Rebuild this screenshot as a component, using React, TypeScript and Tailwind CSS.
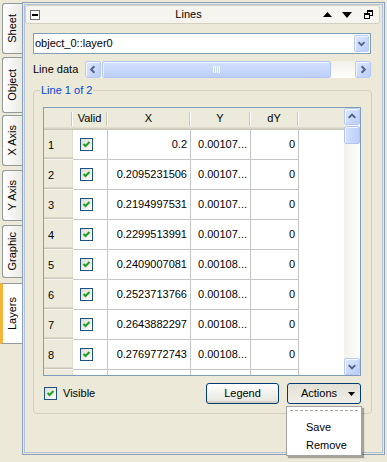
import React from "react"

type Dir = "up" | "down" | "left" | "right"

const ScrollBtn = ({ dir, className = "" }: { dir: Dir; className?: string }) => {
  const pts = {
    up: "4,9 7.5,5.5 11,9",
    down: "4,6 7.5,9.5 11,6",
    left: "9,4 5.5,7.5 9,11",
    right: "6,4 9.5,7.5 6,11",
  }[dir]
  return (
    <div
      className={`shrink-0 flex items-center justify-center rounded-[2px] border border-[#b7cbf5] bg-linear-to-br from-[#e0e8fd] to-[#b9cdf9] shadow-[inset_1px_1px_0_#f2f6ff] ${className}`}
    >
      <svg width="15" height="15" viewBox="0 0 15 15">
        <polyline points={pts} stroke="#4d6185" strokeWidth="2" fill="none" />
      </svg>
    </div>
  )
}

const Check = () => (
  <div className="w-[13px] h-[13px] shrink-0 border border-[#1c5180] bg-linear-to-br from-[#dedcd4] to-white flex items-center justify-center">
    <svg width="11" height="11" viewBox="0 0 11 11">
      <path d="M2.5 5 L4.5 7 L8.5 3" stroke="#21a121" strokeWidth="2" fill="none" />
    </svg>
  </div>
)

const Tab = ({ label, className }: { label: string; className: string }) => (
  <div
    className={`ml-[2px] w-[20px] flex items-center justify-center rounded-l-[3px] border border-r-0 border-[#919b9c] bg-linear-to-r from-white to-[#ebeae3] ${className}`}
  >
    <span className="[writing-mode:vertical-rl] rotate-180 whitespace-nowrap">{label}</span>
  </div>
)

const HeadSep = () => (
  <div className="flex shrink-0 h-[14px]">
    <div className="w-[1px] bg-[#cdc9b8]" />
    <div className="w-[1px] bg-white" />
  </div>
)

const rows = [
  { n: 1, x: "0.2", y: "0.00107..." },
  { n: 2, x: "0.2095231506", y: "0.00107..." },
  { n: 3, x: "0.2194997531", y: "0.00107..." },
  { n: 4, x: "0.2299513991", y: "0.00107..." },
  { n: 5, x: "0.2409007081", y: "0.00108..." },
  { n: 6, x: "0.2523713766", y: "0.00108..." },
  { n: 7, x: "0.2643882297", y: "0.00108..." },
  { n: 8, x: "0.2769772743", y: "0.00108..." },
]

const rowHead =
  "w-[29px] h-full flex items-center pl-[4px] bg-[#ebeadb] shadow-[inset_0_-1px_#f7f6f0,inset_0_-2px_#cbc7b8,inset_0_-3px_#dcd8c8,inset_-1px_0_#e2decd]"
const cell = "h-full flex items-center border-r border-b border-[#c6c6c6]"

export default function App() {
  return (
    <div className="relative w-[387px] h-[462px] bg-[#ece9d8] overflow-hidden flex text-[11px] leading-[13px] text-black font-['Liberation_Sans',Arial,sans-serif]">
      {/* Side tabs */}
      <div className="w-[22px] shrink-0 flex flex-col">
        <Tab label="Sheet" className="mt-[3px] h-[51px]" />
        <Tab label="Object" className="mt-[3px] h-[56px]" />
        <Tab label="X Axis" className="mt-[2px] h-[51px]" />
        <Tab label="Y Axis" className="mt-[4px] h-[51px]" />
        <Tab label="Graphic" className="mt-[4px] h-[53px]" />
        <div className="mt-[5px] w-[22px] h-[61px] flex items-center justify-center border-y border-[#919b9c] border-l-[3px] border-l-[#f5b53a] bg-white">
          <span className="[writing-mode:vertical-rl] rotate-180 whitespace-nowrap">Layers</span>
        </div>
      </div>

      {/* Dock frame */}
      <div className="mt-[2px] h-[453px] w-[363px] border border-[#8aa0bb] p-[1px]">
        <div className="h-full border border-[#b3c2d6] flex flex-col">
          {/* Title bar */}
          <div className="h-[19px] mr-[2px] flex items-center rounded-[3px] border border-[#d3d0c2] bg-[#f5f4ef]">
            <div className="ml-[4px] w-[10px] h-[10px] border border-[#707070] bg-[#fbfbf8] flex items-center justify-center">
              <div className="w-[6px] h-[2px] bg-black" />
            </div>
            <div className="flex-1 pl-[14px] text-center">Lines</div>
            <div className="flex items-center mr-[6px]">
              <svg width="9" height="5" viewBox="0 0 9 5">
                <polygon points="0,5 4.5,0 9,5" fill="black" />
              </svg>
              <svg width="10" height="6" viewBox="0 0 10 6" className="ml-[10px]">
                <polygon points="0,0 10,0 5,6" fill="black" />
              </svg>
              <svg width="9" height="9" viewBox="0 0 9 9" className="ml-[12px]">
                <rect x="3.5" y="0.5" width="5" height="5" fill="none" stroke="black" />
                <rect x="3" y="0" width="6" height="2" fill="black" />
                <rect x="0.5" y="3.5" width="5" height="5" fill="white" stroke="black" />
                <rect x="0" y="3" width="6" height="2" fill="black" />
              </svg>
            </div>
          </div>

          {/* Combo */}
          <div className="mt-[9px] ml-[8px] w-[338px] h-[21px] border border-[#7f9db9] bg-white flex items-center">
            <span className="pl-[1px] flex-1">object_0::layer0</span>
            <ScrollBtn dir="down" className="w-[15px] h-[17px] mr-[1px]" />
          </div>

          {/* Line data */}
          <div className="mt-[7px] ml-[8px] flex items-center h-[17px]">
            <span className="w-[52px]">Line data</span>
            <div className="w-[286px] h-[17px] flex bg-linear-to-b from-[#f3f1ec] to-[#fefefb]">
              <ScrollBtn dir="left" className="w-[16px] h-[17px]" />
              <div className="ml-[1px] w-[229px] h-[17px] rounded-[2px] border border-[#b1c5f6] bg-linear-to-b from-[#d4e0fd] to-[#bccff9] shadow-[inset_1px_1px_0_#eef3ff] flex items-center justify-center">
                <div className="flex gap-[1px]">
                  <div className="w-[1px] h-[7px] bg-white" />
                  <div className="w-[1px] h-[7px] bg-white" />
                  <div className="w-[1px] h-[7px] bg-white" />
                  <div className="w-[1px] h-[7px] bg-white" />
                </div>
              </div>
              <div className="flex-1" />
              <ScrollBtn dir="right" className="w-[16px] h-[17px]" />
            </div>
          </div>

          {/* Group box */}
          <div className="relative mt-[12px] ml-[8px] w-[339px] h-[324px] border border-[#d0d0bf] rounded-[4px] pt-[16px] pl-[9px]">
            <span className="absolute left-[6px] top-[-7px] px-[1px] bg-[#ece9d8] text-[#0046d5]">Line 1 of 2</span>

            {/* Table */}
            <div className="w-[318px] h-[269px] border border-[#7f9db9] bg-white flex overflow-hidden">
              <div className="w-[300px] flex flex-col overflow-hidden">
                <div className="h-[22px] shrink-0 flex items-center bg-[#ebeadb] shadow-[inset_0_-1px_#cbc7b8,inset_0_-2px_#d6d2c2,inset_0_-3px_#e2decd]">
                  <div className="w-[29px] h-full flex items-center justify-end pb-[1px]">
                    <HeadSep />
                  </div>
                  <div className="w-[35px] h-full flex items-center pb-[1px]">
                    <span className="flex-1 text-center">Valid</span>
                    <HeadSep />
                  </div>
                  <div className="w-[83px] h-full flex items-center pb-[1px]">
                    <span className="flex-1 text-center">X</span>
                    <HeadSep />
                  </div>
                  <div className="w-[60px] h-full flex items-center pb-[1px]">
                    <span className="flex-1 text-center">Y</span>
                    <HeadSep />
                  </div>
                  <div className="w-[48px] h-full flex items-center pb-[1px]">
                    <span className="flex-1 text-center">dY</span>
                    <HeadSep />
                  </div>
                </div>

                {rows.map((r) => (
                  <div key={r.n} className="h-[30px] shrink-0 flex">
                    <div className={rowHead}>{r.n}</div>
                    <div className={`${cell} w-[35px] pl-[7px]`}>
                      <Check />
                    </div>
                    <div className={`${cell} w-[83px] justify-end pr-[3px]`}>{r.x}</div>
                    <div className={`${cell} w-[60px] justify-end pr-[3px]`}>{r.y}</div>
                    <div className={`${cell} w-[48px] justify-end pr-[3px]`}>0</div>
                  </div>
                ))}
                {/* partially visible next row */}
                <div className="h-[30px] shrink-0 flex">
                  <div className={rowHead} />
                  <div className={`${cell} w-[35px]`} />
                  <div className={`${cell} w-[83px]`} />
                  <div className={`${cell} w-[60px]`} />
                  <div className={`${cell} w-[48px]`} />
                </div>
              </div>

              {/* Vertical scrollbar */}
              <div className="w-[16px] h-full flex flex-col bg-linear-to-r from-[#f3f1ec] to-[#fefefb]">
                <ScrollBtn dir="up" className="w-[16px] h-[17px]" />
                <div className="mt-[1px] h-[18px] rounded-[2px] border border-[#b1c5f6] bg-linear-to-r from-[#d4e0fd] to-[#bccff9] shadow-[inset_1px_1px_0_#eef3ff]" />
                <div className="flex-1" />
                <ScrollBtn dir="down" className="w-[16px] h-[17px]" />
              </div>
            </div>

            {/* Bottom row */}
            <div className="mt-[7px] w-[318px] h-[21px] flex items-center">
              <div className="ml-[1px]">
                <Check />
              </div>
              <span className="ml-[6px]">Visible</span>
              <div className="flex-1" />
              <div className="w-[73px] h-[21px] flex items-center justify-center rounded-[3px] border border-[#003c74] bg-linear-to-b from-white to-[#e6e5dc] shadow-[inset_0_-2px_#d6d0c5]">
                Legend
              </div>
              <div className="ml-[8px] w-[74px] h-[21px] flex items-center rounded-[3px] border border-[#003c74] bg-linear-to-b from-[#e3e1d6] to-[#efeee6]">
                <span className="flex-1 text-center pl-[2px]">Actions</span>
                <svg width="7" height="4" viewBox="0 0 7 4" className="mr-[5px]">
                  <polygon points="0,0 7,0 3.5,4" fill="black" />
                </svg>
              </div>
            </div>
          </div>
        </div>
      </div>

      {/* Popup menu */}
      <div className="absolute left-[286px] top-[406px] w-[76px] h-[50px] border border-[#a5a4a0] bg-white shadow-[2px_2px_1px_rgba(0,0,0,0.3)]">
        <div className="mt-[3px] mx-[3px] border-t border-dashed border-[#aca899]" />
        <div className="mt-[7px] h-[18px] flex items-center pl-[19px]">Save</div>
        <div className="h-[18px] flex items-center pl-[19px]">Remove</div>
      </div>
    </div>
  )
}
